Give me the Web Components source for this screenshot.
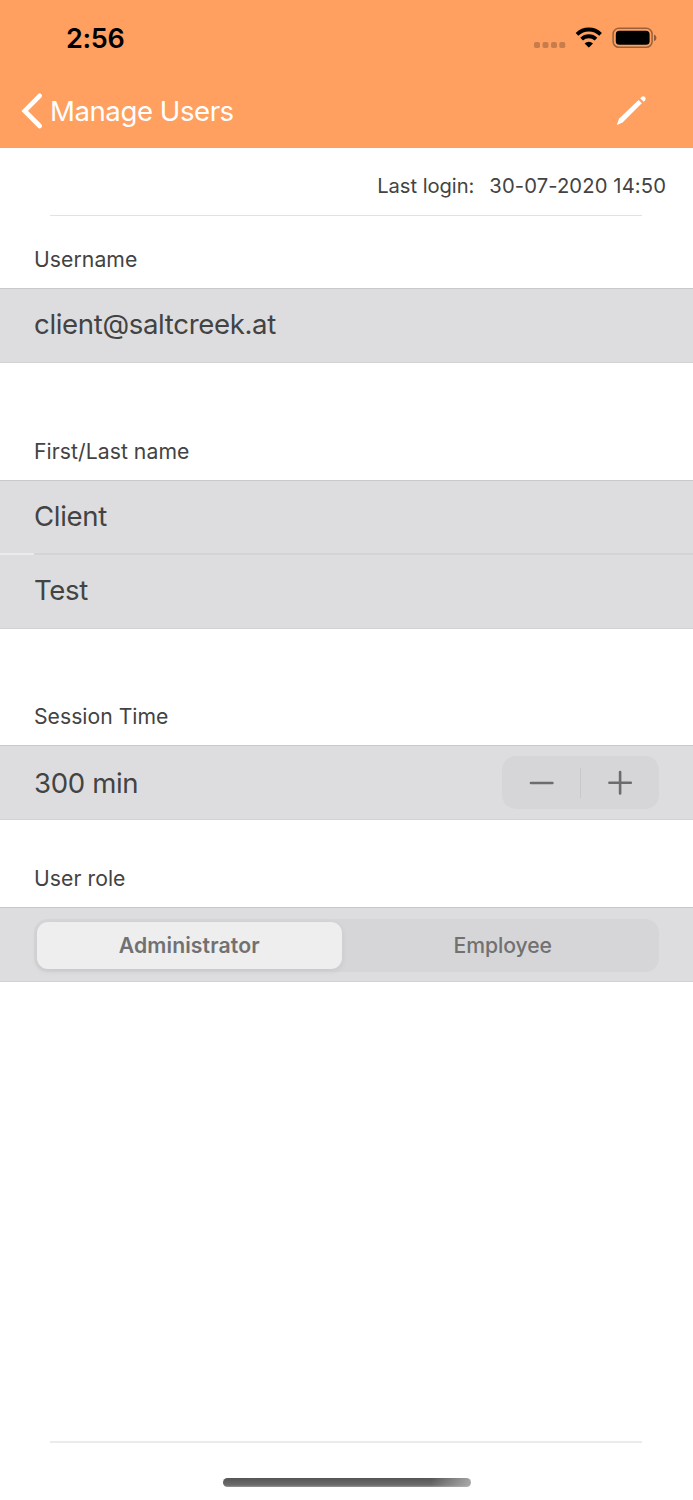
<!DOCTYPE html>
<html lang="en">
<head>
<meta charset="utf-8">
<title>Manage Users</title>
<style>
  html, body {
    margin: 0;
    background: #fff;
  }

  body {
    font-family: Inter, "Liberation Sans", sans-serif;
    color: #434343;
    --header: #ffa060;
    --row: #dddddf;
    --control: #d6d6d8;
    --line: #c9c9cb;
  }
</style>
</head>
<body>

<user-screen>
  <status-bar slot="header" time="2:56"></status-bar>
  <nav-bar slot="header">Manage Users</nav-bar>

  <last-login label="Last login:">30-07-2020 14:50</last-login>

  <form-section label="Username" style="--label: 72px; --spacing: 0.05px">
    <form-row style="--lift: 3px">client@saltcreek.at</form-row>
  </form-section>
  <form-section label="First/Last name" style="--label: 117px; --spacing: 0.05px">
    <form-row inset style="--lift: 3px">Client</form-row>
    <form-row style="--lift: 3px">Test</form-row>
  </form-section>
  <form-section label="Session Time" style="--label: 116px; --spacing: 0px">
    <form-row>300 min<time-stepper slot="control"></time-stepper></form-row>
  </form-section>
  <form-section label="User role" style="--label: 87px; --spacing: 0.05px">
    <form-row><segmented-control slot="control" options="Administrator,Employee"></segmented-control></form-row>
  </form-section>

  <home-indicator slot="footer"></home-indicator>
</user-screen>

<script>
class UserScreen extends HTMLElement {
  constructor() {
    super();
    this.attachShadow({ mode: 'open' });
    this.shadowRoot.innerHTML = `
      <style>
        :host {
          display: flex;
          flex-direction: column;
          width: 693px;
          height: 1500px;
          overflow: hidden;
        }

        header {
          height: 148px;
          background: var(--header);
        }

        main {
          flex: 1;
        }
      </style>
      <header><slot name="header"></slot></header>
      <main><slot></slot></main>
      <slot name="footer"></slot>
    `;
  }
}

class StatusBar extends HTMLElement {
  constructor() {
    super();
    this.attachShadow({ mode: 'open' });
    this.shadowRoot.innerHTML = `
      <style>
        :host {
          display: flex;
          justify-content: space-between;
          box-sizing: border-box;
          height: 74px;
          padding: 22px 35px 0 66px;
          color: #000;
        }

        time {
          font-size: 27px;
          font-weight: 600;
          line-height: 33px;
          letter-spacing: -0.3px;
        }

        svg {
          display: block;
        }
      </style>
      <time>${this.getAttribute('time')}</time>
      <svg width="125" height="32" viewBox="533 22 125 32">
        <g fill="#000" fill-opacity=".22">
          <rect x="534" y="42" width="6" height="6" rx="1.8"/>
          <rect x="542.5" y="42" width="6" height="6" rx="1.8"/>
          <rect x="551" y="42" width="6" height="6" rx="1.8"/>
          <rect x="559.3" y="42" width="6" height="6" rx="1.8"/>
        </g>
        <g fill="none" stroke="#000" stroke-width="3.8">
          <path d="M577 34.3a16.9 16.9 0 0 1 23.6 0"/>
          <path d="M581.6 39.2a10.3 10.3 0 0 1 14.4 0"/>
        </g>
        <path d="M584.6 43.4a6 6 0 0 1 8.4 0l-3.5 3.7q-.7.7-1.4 0z"/>
        <rect x="613.1" y="28.3" width="39" height="19" rx="5.8" fill="none" stroke="#000" stroke-opacity=".4" stroke-width="1.5"/>
        <rect x="615.8" y="30.8" width="33.8" height="14" rx="3.6"/>
        <path d="M654 34.5q2.5 1 2.5 3.4t-2.5 3.4z" fill-opacity=".42"/>
      </svg>
    `;
  }
}

class NavBar extends HTMLElement {
  constructor() {
    super();
    this.attachShadow({ mode: 'open' });
    this.shadowRoot.innerHTML = `
      <style>
        :host {
          display: flex;
          align-items: center;
          box-sizing: border-box;
          height: 74px;
          padding: 0 45px 0 20px;
          color: #fff;
        }

        .title {
          flex: 1;
          margin-left: 6px;
          font-size: 27.6px;
          line-height: 34px;
          letter-spacing: -0.45px;
          white-space: nowrap;
        }
      </style>
      <svg width="24" height="38" viewBox="20 92 24 38" fill="none" stroke="#fff" stroke-width="4.6" stroke-linecap="round" stroke-linejoin="miter">
        <path d="M39.7 95.8 24.7 111l15 15"/>
      </svg>
      <span class="title"><slot></slot></span>
      <svg width="32" height="32" viewBox="616 94.6 32 32" fill="#fff">
        <path d="m616.8 124.7 2.2-6.3 19.6-18.9 3.2 3.3-19.2 19.2z"/>
        <path d="m640.2 97.9 1.3-1.3q1.8-1.5 3.4 0t.2 3.4l-1.5 1.4z"/>
      </svg>
    `;
  }
}

class LastLogin extends HTMLElement {
  constructor() {
    super();
    this.attachShadow({ mode: 'open' });
    this.shadowRoot.innerHTML = `
      <style>
        :host {
          display: block;
        }

        p {
          display: flex;
          justify-content: flex-end;
          gap: 15px;
          height: 67px;
          box-sizing: border-box;
          margin: 0;
          padding: 25px 27px 0 0;
          font-size: 20.2px;
          line-height: 26px;
          letter-spacing: 0.12px;
        }

        p span:first-child {
          letter-spacing: -0.05px;
        }

        hr {
          width: 592px;
          height: 1px;
          margin: 0 0 0 50px;
          border: 0;
          background: #e2e2e2;
        }
      </style>
      <p><span>${this.getAttribute('label')}</span><span><slot></slot></span></p>
      <hr>
    `;
  }
}

/*
Attributes:
  - label [text above the rows]
Custom properties:
  - --label: height of the label's block
  - --spacing: letter spacing of the label
*/
class FormSection extends HTMLElement {
  constructor() {
    super();
    this.attachShadow({ mode: 'open' });
    this.shadowRoot.innerHTML = `
      <style>
        :host {
          display: block;
        }

        .label {
          display: flex;
          align-items: flex-end;
          box-sizing: border-box;
          height: var(--label);
          padding: 0 34px 16px;
          font-size: 21.2px;
          line-height: 26px;
          letter-spacing: var(--spacing);
        }

        .rows {
          border-top: 1px solid var(--line);
          border-bottom: 1px solid #d2d2d3;
        }
      </style>
      <div class="label">${this.getAttribute('label')}</div>
      <div class="rows"><slot></slot></div>
    `;
  }
}

class FormRow extends HTMLElement {
  constructor() {
    super();
    this.attachShadow({ mode: 'open' });
    this.shadowRoot.innerHTML = `
      <style>
        :host {
          display: flex;
          justify-content: space-between;
          align-items: center;
          box-sizing: border-box;
          height: 73px;
          padding: 0 34px;
          background: var(--row);
          font-size: 27.6px;
          line-height: 34px;
          letter-spacing: -0.35px;
        }

        /* separator that starts at the text */
        :host([inset]) {
          height: 74px;
          padding-bottom: 2px;
          background:
            linear-gradient(to right, #ebebec 34px, #d4d4d6 34px) bottom / 100% 2px no-repeat,
            var(--row);
        }

        .value {
          padding-bottom: var(--lift, 0);
        }
      </style>
      <span class="value"><slot></slot></span>
      <slot name="control"></slot>
    `;
  }
}

class TimeStepper extends HTMLElement {
  constructor() {
    super();
    this.attachShadow({ mode: 'open' });
    this.shadowRoot.innerHTML = `
      <style>
        :host {
          display: grid;
          grid-template-columns: 1fr 1px 1fr;
          place-items: center;
          width: 157px;
          height: 53px;
          border-radius: 14px;
          background: var(--control);
        }

        i {
          width: 1px;
          height: 30px;
          background: #c8c8ca;
        }

        svg {
          fill: none;
          stroke: #6c6c6d;
          stroke-width: 2.6;
          stroke-linecap: round;
        }
      </style>
      <svg width="26" height="26"><path d="M3 13h21.4"/></svg>
      <i></i>
      <svg width="26" height="26"><path d="M2.4 12.8h21.4M13.1 2.1v21.4"/></svg>
    `;
  }
}

class SegmentedControl extends HTMLElement {
  constructor() {
    super();
    const options = this.getAttribute('options').split(',');

    this.attachShadow({ mode: 'open' });
    this.shadowRoot.innerHTML = `
      <style>
        :host {
          display: grid;
          grid-template-columns: 304.5px 1fr;
          box-sizing: border-box;
          width: 625px;
          height: 53px;
          margin-top: 2px;
          padding: 3px;
          border-radius: 14px;
          background: var(--control);
          color: #717172;
          font-size: 21.2px;
          line-height: 47px;
          text-align: center;
        }

        span:first-of-type {
          border-radius: 11px;
          background: #eee;
          box-shadow: 0 2px 6px rgba(0, 0, 0, 0.07);
          font-weight: 570;
          letter-spacing: 0.1px;
        }

        span:last-of-type {
          padding-left: 8px;
          font-weight: 500;
          letter-spacing: -0.1px;
        }
      </style>
      ${options.map(option => `<span>${option}</span>`).join('')}
    `;
  }
}

class HomeIndicator extends HTMLElement {
  constructor() {
    super();
    this.attachShadow({ mode: 'open' });
    this.shadowRoot.innerHTML = `
      <style>
        :host {
          display: block;
          height: 59px;
        }

        hr {
          width: 592px;
          height: 2px;
          margin: 0 0 0 50px;
          border: 0;
          background: #ebebeb;
        }

        div {
          width: 248px;
          height: 8.5px;
          margin: 35px 0 0 222.5px;
          border-radius: 5px;
          background:
            linear-gradient(to right, transparent 84%, rgba(190, 190, 190, 0.75)),
            linear-gradient(#555, #6c6c6c 80%, #999);
        }
      </style>
      <hr>
      <div></div>
    `;
  }
}

customElements.define('user-screen', UserScreen);
customElements.define('status-bar', StatusBar);
customElements.define('nav-bar', NavBar);
customElements.define('last-login', LastLogin);
customElements.define('form-section', FormSection);
customElements.define('form-row', FormRow);
customElements.define('time-stepper', TimeStepper);
customElements.define('segmented-control', SegmentedControl);
customElements.define('home-indicator', HomeIndicator);
</script>
</body>
</html>
